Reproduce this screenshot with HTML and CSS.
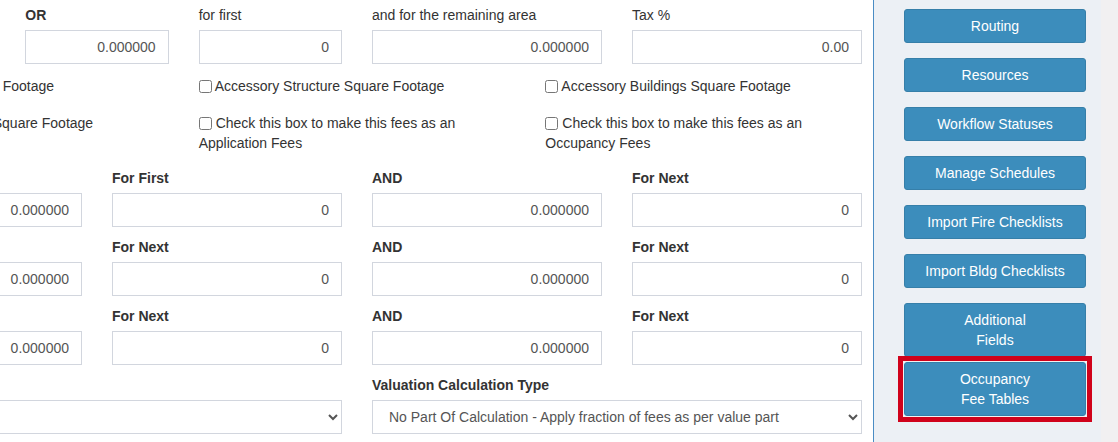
FILE: index.html
```html
<!DOCTYPE html>
<html lang="en">
<head>
<meta charset="utf-8">
<title>Fee Setup</title>
<link rel="stylesheet" href="styles.css">
</head>
<body>
<div class="page">
  <main class="main">
    <div class="form">
      <div class="row cols-5">
        <div class="fg"><label>&nbsp;</label><input class="fc" type="text" value="0.000000"></div>
        <div class="fg"><label class="b">OR</label><input class="fc" type="text" value="0.000000"></div>
        <div class="fg"><label>for first</label><input class="fc" type="text" value="0"></div>
        <div class="fg"><label>and for the remaining area</label><input class="fc" type="text" value="0.000000"></div>
        <div class="fg"><label>Tax %</label><input class="fc" type="text" value="0.00"></div>
      </div>
      <div class="row cols-3 checks-a">
        <label class="check"><input type="checkbox">New Building Square Footage</label>
        <label class="check"><input type="checkbox">Accessory Structure Square Footage</label>
        <label class="check"><input type="checkbox">Accessory Buildings Square Footage</label>
      </div>
      <div class="row cols-3 checks-b">
        <label class="check"><input type="checkbox">Residential Garage Square Footage</label>
        <label class="check"><input type="checkbox">Check this box to make this fees as an Application Fees</label>
        <label class="check"><input type="checkbox">Check this box to make this fees as an Occupancy Fees</label>
      </div>
      <div class="row cols-4">
        <div class="fg"><label class="b">&nbsp;</label><input class="fc" type="text" value="0.000000"></div>
        <div class="fg"><label class="b">For First</label><input class="fc" type="text" value="0"></div>
        <div class="fg"><label class="b">AND</label><input class="fc" type="text" value="0.000000"></div>
        <div class="fg"><label class="b">For Next</label><input class="fc" type="text" value="0"></div>
      </div>
      <div class="row cols-4">
        <div class="fg"><label class="b">&nbsp;</label><input class="fc" type="text" value="0.000000"></div>
        <div class="fg"><label class="b">For Next</label><input class="fc" type="text" value="0"></div>
        <div class="fg"><label class="b">AND</label><input class="fc" type="text" value="0.000000"></div>
        <div class="fg"><label class="b">For Next</label><input class="fc" type="text" value="0"></div>
      </div>
      <div class="row cols-4">
        <div class="fg"><label class="b">&nbsp;</label><input class="fc" type="text" value="0.000000"></div>
        <div class="fg"><label class="b">For Next</label><input class="fc" type="text" value="0"></div>
        <div class="fg"><label class="b">AND</label><input class="fc" type="text" value="0.000000"></div>
        <div class="fg"><label class="b">For Next</label><input class="fc" type="text" value="0"></div>
      </div>
      <div class="row cols-2">
        <div class="fg"><label class="b">&nbsp;</label>
          <select class="fc sel"><option></option></select>
        </div>
        <div class="fg"><label class="b">Valuation Calculation Type</label>
          <select class="fc sel"><option>No Part Of Calculation - Apply fraction of fees as per value part</option></select>
        </div>
      </div>
    </div>
  </main>
  <aside class="side">
    <button class="btn" type="button">Routing</button>
    <button class="btn" type="button">Resources</button>
    <button class="btn" type="button">Workflow Statuses</button>
    <button class="btn" type="button">Manage Schedules</button>
    <button class="btn" type="button">Import Fire Checklists</button>
    <button class="btn" type="button">Import Bldg Checklists</button>
    <button class="btn btn-tight" type="button">Additional<br>Fields</button>
    <button class="btn btn-marked" type="button">Occupancy<br>Fee Tables</button>
  </aside>
</div>
</body>
</html>
```

FILE: styles.css
```css
* { box-sizing: border-box; }

html, body {
  margin: 0;
  padding: 0;
  height: 100%;
}

body {
  background: #f1f0f1;
  font-family: "Liberation Sans", Arial, sans-serif;
  font-size: 14px;
  line-height: 20px;
  color: #333;
  overflow: hidden;
}

.page {
  display: flex;
  height: 442px;
}

.main {
  width: 874px;
  flex: none;
  background: #fff;
  border-right: 1px solid #4a8cc4;
  overflow: hidden;
}

.form {
  width: 1010px;
  margin-left: -148px;
  padding-top: 5px;
}

.row {
  display: grid;
  column-gap: 30px;
}

.cols-5 { grid-template-columns: 1fr 1fr 1fr 230px 230px; }
.cols-4 { grid-template-columns: repeat(4, 1fr); }
.cols-3 { grid-template-columns: repeat(3, 1fr); }
.cols-2 { grid-template-columns: repeat(2, 1fr); }

.fg {
  margin-bottom: 10px;
  min-width: 0;
}

.fg label {
  display: block;
  margin-bottom: 5px;
  line-height: 20px;
  white-space: nowrap;
}

.fg label.b { font-weight: bold; }

.fc {
  display: block;
  width: 100%;
  height: 34px;
  padding: 6px 12px;
  border: 1px solid #d2d6de;
  border-radius: 0;
  background: #fff;
  color: #555;
  font-family: "Liberation Sans", Arial, sans-serif;
  font-size: 14px;
  line-height: 20px;
  text-align: right;
  outline: none;
}

.sel {
  text-align: left;
  padding: 6px 8px 6px 12px;
}

.checks-a {
  padding-top: 2px;
  margin-bottom: 17px;
}

.checks-b {
  margin-bottom: 15px;
}

.check {
  display: block;
  line-height: 20px;
  white-space: normal;
  min-width: 0;
}

.check input {
  width: 13px;
  height: 13px;
  margin: 0 3px 0 0;
  vertical-align: -2px;
}

.checks-b .check input {
  margin-right: 4px;
}

.side {
  width: 227px;
  flex: none;
  background: #ecf0f5;
  padding: 9px 15px 0 30px;
  display: flex;
  flex-direction: column;
}

.btn {
  display: block;
  width: 182px;
  margin: 0 0 15px 0;
  padding: 6px 12px;
  border: 1px solid #367fa9;
  border-radius: 3px;
  background: #3c8dbc;
  color: #fff;
  font-family: "Liberation Sans", Arial, sans-serif;
  font-size: 14px;
  line-height: 20px;
  text-align: center;
  cursor: pointer;
}

.btn-tight { margin-bottom: 5px; }

.btn-marked {
  position: relative;
}

.btn-marked::after {
  content: "";
  position: absolute;
  top: -7px;
  left: -7px;
  right: -7px;
  bottom: -7px;
  border: 5px solid #d0021b;
  box-shadow: inset 0 0 0 1px #f2f2f2;
  pointer-events: none;
}
```
